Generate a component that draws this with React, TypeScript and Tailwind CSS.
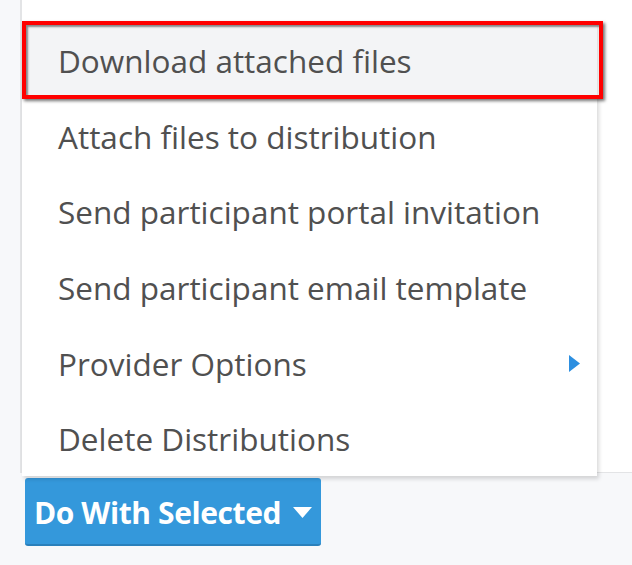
import { useState } from "react";

const items = [
  "Download attached files",
  "Attach files to distribution",
  "Send participant portal invitation",
  "Send participant email template",
  "Provider Options",
  "Delete Distributions",
];

export default function App() {
  const [hovered] = useState(0);

  return (
    <div
      className="relative w-[632px] h-[565px] overflow-hidden bg-[#f7f8fa]"
      style={{ fontFamily: '"Open Sans", "Noto Sans", sans-serif' }}
    >
      {/* panel behind the menu */}
      <div className="ml-[20px] h-[473px] bg-white border-l-2 border-b border-[#e3e4e6]" />

      {/* toggle button */}
      <div className="ml-[25px] mt-[5px]">
        <button className="flex items-center gap-[12px] h-[68px] pt-[3px] pl-[9px] pr-[9px] rounded-[3px] bg-[#3498db] border-b-2 border-[#2a80bb] text-white text-[30px] font-bold tracking-[-0.4px]">
          Do With Selected
          <svg width="19" height="11" viewBox="0 0 19 11">
            <path d="M0 0 L19 0 L9.5 11 Z" fill="white" />
          </svg>
        </button>
      </div>

      {/* dropdown menu */}
      <ul className="absolute left-[22px] top-[22px] w-[575px] bg-white shadow-[2px_3px_4px_rgba(0,0,0,0.15)]">
        {items.map((label, i) => (
          <li
            key={label}
            className={
              "relative flex items-center h-[75.6px] pt-[2px] pl-[36px] pr-[17px] text-[31.5px] text-[#505050] " +
              (i === hovered ? "bg-[#f3f4f6]" : "")
            }
          >
            <span className="flex-1">{label}</span>
            {label === "Provider Options" && (
              <svg width="11" height="17" viewBox="0 0 11 17">
                <path d="M0 0 L11 8.5 L0 17 Z" fill="#2d8fe0" />
              </svg>
            )}
            {i === hovered && (
              <div className="absolute left-0 top-[-1px] w-[581px] h-[78px] border-4 border-[#ff0000] shadow-[2px_2px_3px_rgba(0,0,0,0.55),inset_2px_2px_2px_rgba(0,0,0,0.45)]" />
            )}
          </li>
        ))}
      </ul>
    </div>
  );
}
